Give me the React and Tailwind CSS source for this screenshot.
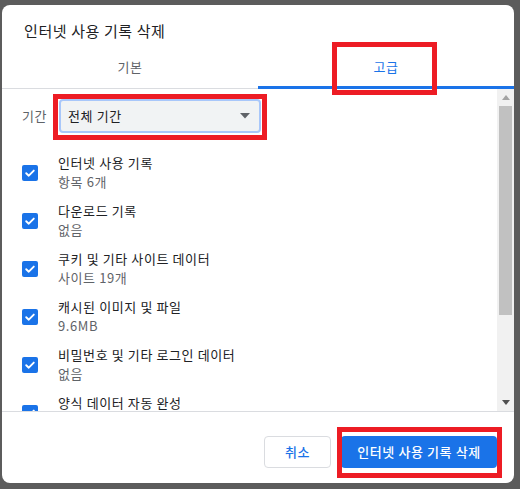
import React from "react";

const items = [
  { title: "인터넷 사용 기록", sub: "항목 6개" },
  { title: "다운로드 기록", sub: "없음" },
  { title: "쿠키 및 기타 사이트 데이터", sub: "사이트 19개" },
  { title: "캐시된 이미지 및 파일", sub: "9.6MB" },
  { title: "비밀번호 및 기타 로그인 데이터", sub: "없음" },
  { title: "양식 데이터 자동 완성", sub: "" },
];

function Check() {
  return (
    <div className="w-[16px] h-[16px] rounded-[2px] bg-[#1a73e8] flex items-center justify-center shrink-0">
      <svg width="12" height="12" viewBox="0 0 12 12">
        <path d="M2.2 6.2 L4.8 8.7 L9.8 3.6" fill="none" stroke="white" strokeWidth="1.9" strokeLinecap="round" strokeLinejoin="round" />
      </svg>
    </div>
  );
}

export default function App() {
  return (
    <div
      className="relative w-[520px] h-[489px] overflow-hidden bg-[#5c5c5c] tracking-[0.6px]"
      style={{ fontFamily: '"Noto Sans CJK KR", "Noto Sans", sans-serif' }}
    >
      <div className="ml-[2px] mt-[5px] w-[512px] h-[478px] bg-white rounded-[8px] overflow-hidden flex flex-col">
        {/* Title */}
        <div className="h-[39px] pl-[22px] pt-[16px] text-[15px] leading-[20px] text-[#202124]">
          인터넷 사용 기록 삭제
        </div>
        {/* Tabs */}
        <div className="flex h-[45px]">
          <div className="flex-1 flex items-center justify-center border-b border-[#dadce0] text-[13px] text-[#5f6368] pt-[1px]">
            기본
          </div>
          <div className="flex-1 flex items-center justify-center border-b-[3px] border-[#1a73e8] text-[13px] text-[#1a73e8] pt-[3px]">
            고급
          </div>
        </div>
        {/* Scroll area */}
        <div className="flex h-[322px] overflow-hidden">
          <div className="flex-1 overflow-hidden">
            <div className="flex items-center mt-[10px] pl-[20px]">
              <span className="text-[13px] text-[#5f6368] w-[37px]">기간</span>
              <div className="w-[202px] h-[34px] rounded-[4px] bg-[#f1f3f4] border-2 border-[#a8c7fa] flex items-center justify-between pl-[7px] pr-[9px]">
                <span className="text-[13px] text-[#202124]">전체 기간</span>
                <svg width="10" height="6" viewBox="0 0 10 6">
                  <path d="M0 0 L10 0 L5 5.5 Z" fill="#5f6368" />
                </svg>
              </div>
            </div>
            <div className="mt-[16px]">
              {items.map((it, i) => (
                <div key={i} className="h-[48px] flex items-center pl-[20px]">
                  <Check />
                  <div className="ml-[20px] flex flex-col pb-[2px]">
                    <span className="text-[13px] leading-[20px] text-[#202124]">{it.title}</span>
                    <span className="text-[13px] leading-[18px] text-[#5f6368]">{it.sub || "\u00a0"}</span>
                  </div>
                </div>
              ))}
            </div>
          </div>
          {/* Scrollbar */}
          <div className="w-[17px] bg-[#f1f1f1] flex flex-col items-center">
            <div className="h-[17px] flex items-center justify-center">
              <svg width="8" height="5" viewBox="0 0 8 5">
                <path d="M0 5 L8 5 L4 0 Z" fill="#a3a3a3" />
              </svg>
            </div>
            <div className="w-[13px] h-[209px] bg-[#c1c1c1]" />
            <div className="flex-1" />
            <div className="h-[17px] flex items-center justify-center">
              <svg width="8" height="5" viewBox="0 0 8 5">
                <path d="M0 0 L8 0 L4 5 Z" fill="#505050" />
              </svg>
            </div>
          </div>
        </div>
        {/* Footer */}
        <div className="flex-1 border-t border-[#dadce0] flex justify-end items-start pt-[24px] pr-[17px] gap-[10px]">
          <button className="h-[32px] w-[67px] rounded-[4px] border border-[#dadce0] bg-white text-[13px] text-[#1a73e8] font-medium">
            취소
          </button>
          <button className="h-[32px] w-[156px] rounded-[4px] bg-[#1a73e8] text-[13px] text-white font-medium">
            인터넷 사용 기록 삭제
          </button>
        </div>
      </div>

      {/* Red annotation boxes */}
      <div className="absolute left-[332px] top-[42px] w-[105px] h-[53px] border-[5px] border-[#ed1c24]" />
      <div className="absolute left-[53px] top-[94px] w-[214px] h-[46px] border-[5px] border-[#ed1c24]" />
      <div className="absolute left-[337px] top-[427px] w-[165px] h-[51px] border-[5px] border-[#ed1c24]" />
    </div>
  );
}
